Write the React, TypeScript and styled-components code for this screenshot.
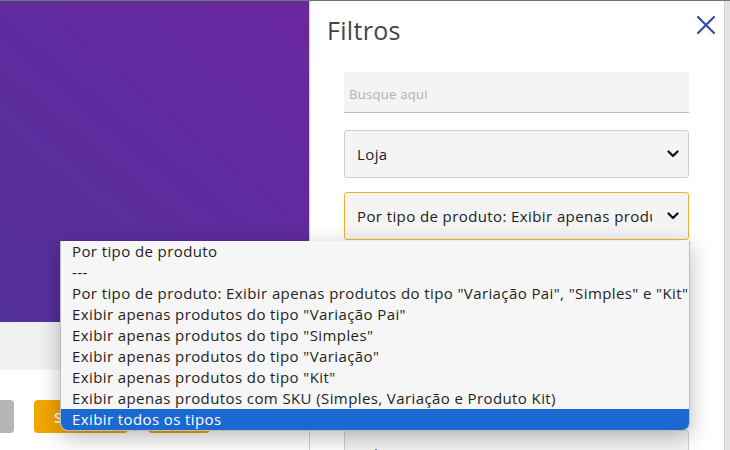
import styled, { createGlobalStyle } from 'styled-components';

const GlobalStyle = createGlobalStyle`
  html, body {
    margin: 0;
    padding: 0;
    background: #ffffff;
    font-family: "Open Sans", "Noto Sans", sans-serif;
    color: #212121;
    overflow: hidden;
  }
`;

const options = [
  'Por tipo de produto',
  '---',
  'Por tipo de produto: Exibir apenas produtos do tipo "Variação Pai", "Simples" e "Kit"',
  'Exibir apenas produtos do tipo "Variação Pai"',
  'Exibir apenas produtos do tipo "Simples"',
  'Exibir apenas produtos do tipo "Variação"',
  'Exibir apenas produtos do tipo "Kit"',
  'Exibir apenas produtos com SKU (Simples, Variação e Produto Kit)',
  'Exibir todos os tipos',
];

// ! layout
const Page = styled.div`
  position: relative;
  display: flex;
  width: 730px;
  height: 450px;
  border-top: 1px solid #6c7a6c;
  box-sizing: border-box;
  overflow: hidden;
`;

const LeftPane = styled.div`
  width: 309px;
  flex-shrink: 0;
  display: flex;
  flex-direction: column;
`;

const Hero = styled.div`
  height: 321px;
  flex-shrink: 0;
  background: linear-gradient(40deg, #53309b 0%, #5f2b9e 55%, #6b279f 100%);
`;

const GreyBand = styled.div`
  height: 48px;
  flex-shrink: 0;
  background: linear-gradient(90deg, #f0f0f0, #f6f6f6);
`;

const ButtonRow = styled.div`
  display: flex;
  gap: 20px;
  padding-top: 30px;
  margin-left: -30px;
`;

const Btn = styled.button<{ $tone: 'grey' | 'orange'; $w: number }>`
  width: ${(p) => p.$w}px;
  height: 33px;
  border: 0;
  border-radius: 4px;
  background: ${(p) => (p.$tone === 'grey' ? '#b5b5b5' : '#f2a600')};
  color: #fff;
  font-family: "Open Sans", sans-serif;
  font-size: 15px;
  font-weight: 600;
  text-align: left;
  padding-left: 20px;
`;

const Panel = styled.div`
  flex: 1;
  background: #fff;
  border-left: 1px solid #d9cbe8;
  padding: 0 35px 0 34px;
  display: flex;
  flex-direction: column;
  & > * {
    flex-shrink: 0;
  }
`;

const Header = styled.div`
  display: flex;
  justify-content: space-between;
  align-items: flex-start;
  height: 71px;
  margin-left: -17px;
  margin-right: -27px;
`;

const Title = styled.h1`
  margin: 12px 0 0;
  font-family: "Open Sans", sans-serif;
  font-weight: 400;
  font-size: 25px;
  line-height: 34px;
  letter-spacing: 0.3px;
  color: #444;
`;

const Close = styled.button`
  margin-top: 14px;
  background: none;
  border: 0;
  padding: 0;
  width: 20px;
  height: 20px;
  cursor: pointer;
`;

const Search = styled.div`
  height: 36px;
  background: #f4f4f4;
  border-bottom: 1px solid #bdbdbd;
  display: flex;
  align-items: center;
  padding: 4px 5px 0;
  margin-bottom: 17px;
  font-size: 13px;
  letter-spacing: 0.3px;
  color: #b0b0b0;
`;

const Fields = styled.div`
  display: flex;
  flex-direction: column;
  gap: 14px;
`;

const Select = styled.div<{ $focus?: boolean; $h?: number }>`
  height: ${(p) => p.$h ?? 46}px;
  box-sizing: content-box;
  background: #f4f4f4;
  border: 1px solid ${(p) => (p.$focus ? '#f3b12a' : '#cfcfcf')};
  border-radius: 3px;
  display: flex;
  align-items: center;
  justify-content: space-between;
  padding: 0 9px 0 12px;
  font-size: 15px;
  letter-spacing: 0.4px;
  color: #222;
  white-space: nowrap;
  overflow: hidden;
`;

const SelectText = styled.span`
  overflow: hidden;
  max-width: 295px;
`;

const Scroll = styled.div`
  width: 5px;
  flex-shrink: 0;
  background: #e3e3e3;
  border-left: 1px solid #d0d0d0;
`;

// ! native select popup (lies over the page)
const Dropdown = styled.ul`
  position: absolute;
  left: 60px;
  top: 240px;
  width: 630px;
  margin: 0;
  padding: 0;
  list-style: none;
  background: #f6f6f6;
  border: 1px solid #bcbcbc;
  border-top: 0;
  border-radius: 0 0 8px 8px;
  box-shadow: 0 6px 22px rgba(0, 0, 0, 0.28);
  overflow: hidden;
  box-sizing: border-box;
`;

const Option = styled.li<{ $active?: boolean }>`
  height: 21px;
  line-height: 21px;
  padding-left: 11px;
  font-size: 15px;
  letter-spacing: 0.4px;
  white-space: nowrap;
  color: ${(p) => (p.$active ? '#fff' : '#1e1e1e')};
  background: ${(p) => (p.$active ? '#1b68d3' : 'transparent')};
`;

const Chevron = () => (
  <svg width="12" height="8" viewBox="0 0 12 8">
    <polyline points="1.5,1.5 6,6 10.5,1.5" fill="none" stroke="#111" strokeWidth="2.2" strokeLinecap="round" strokeLinejoin="round" />
  </svg>
);

const App = () => {
  return (
    <>
      <GlobalStyle />
      <Page>
        <LeftPane>
          <Hero />
          <GreyBand />
          <ButtonRow>
            <Btn $tone="grey" $w={44} />
            <Btn $tone="orange" $w={94}>S</Btn>
            <Btn $tone="orange" $w={62}>L</Btn>
          </ButtonRow>
        </LeftPane>

        <Panel>
          {/* header */}
          <Header>
            <Title>Filtros</Title>
            <Close aria-label="Fechar">
              <svg width="20" height="20" viewBox="0 0 20 20">
                <path d="M2 2 L18 18 M18 2 L2 18" stroke="#3a4aa6" strokeWidth="2.2" strokeLinecap="round" />
              </svg>
            </Close>
          </Header>

          <Search>Busque aqui</Search>

          <Fields>
            <Select>
              <SelectText>Loja</SelectText>
              <Chevron />
            </Select>
            <Select $focus>
              <SelectText>Por tipo de produto: Exibir apenas produtos</SelectText>
              <Chevron />
            </Select>
            <Select>
              <SelectText>Categoria</SelectText>
              <Chevron />
            </Select>
            <Select>
              <SelectText>Marca</SelectText>
              <Chevron />
            </Select>
            <Select $h={36}>
              <SelectText>Situação</SelectText>
              <Chevron />
            </Select>
            <Select>
              <SelectText>Fabricante:</SelectText>
              <Chevron />
            </Select>
          </Fields>
        </Panel>
        <Scroll />

        <Dropdown>
          {options.map((o, i) => (
            <Option key={i} $active={i === options.length - 1}>
              {o}
            </Option>
          ))}
        </Dropdown>
      </Page>
    </>
  );
};

export default App;
